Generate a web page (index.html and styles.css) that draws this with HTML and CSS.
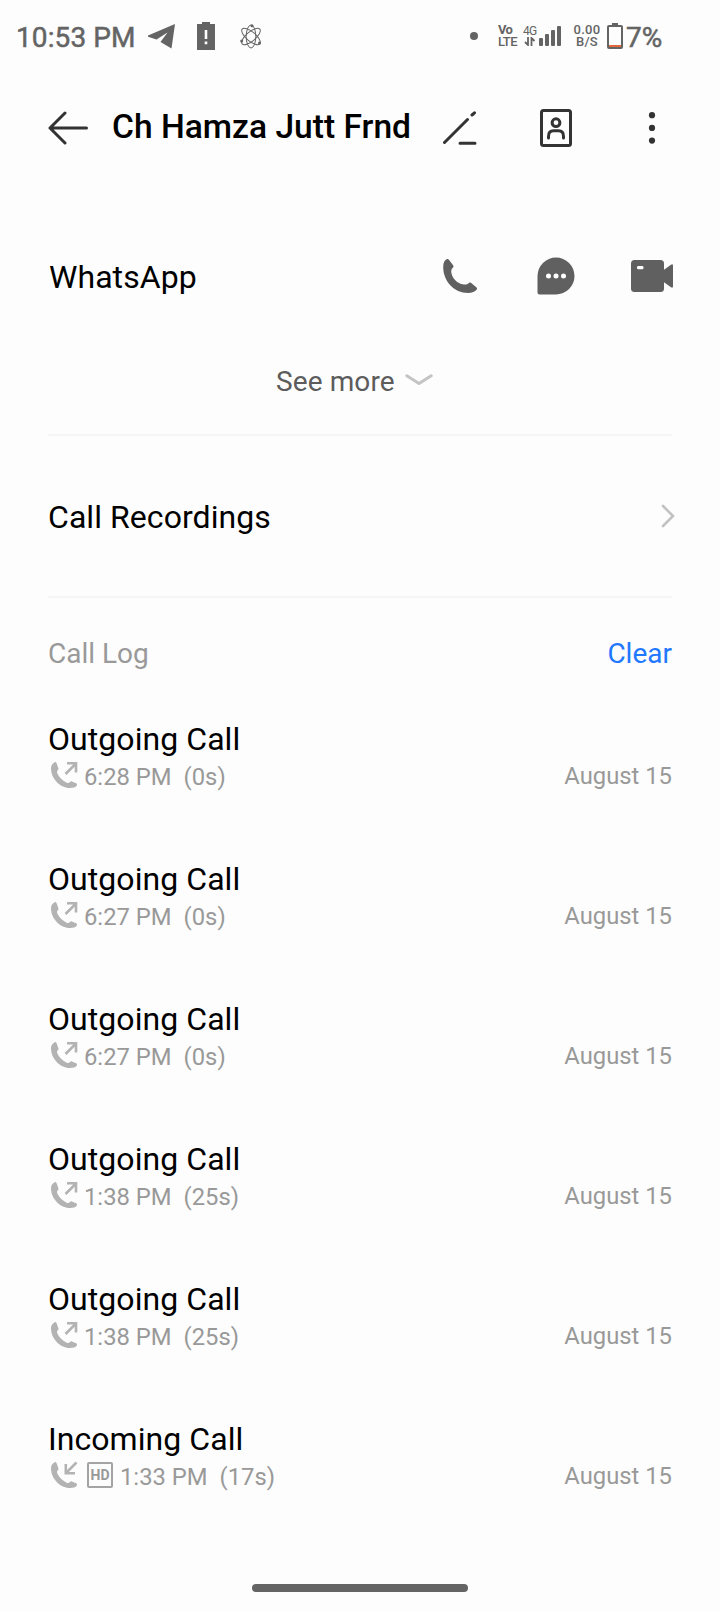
FILE: index.html
```html
<!DOCTYPE html>
<html lang="en">
<head>
<meta charset="utf-8">
<title>Contact details</title>
<link rel="stylesheet" href="styles.css">
</head>
<body>
<svg width="0" height="0" class="defs">
  <symbol id="handset" viewBox="0 0 28 28"><path fill="currentColor" d="M4.700 1.200C2.800 2.200 1 4 1 7.200C1 17 9.500 27 20 27C23.200 27 25.600 26.300 26.800 24.500C27.300 23.700 27 22.800 26.200 22.300L21.800 20.400C21 20.100 20.300 20.500 19.700 21.200C18.800 22.200 17.500 22.300 16.200 21.500C12.600 19.800 9 16.300 7.400 12.600C6.800 11.300 7 10.200 7.800 9.300C8.500 8.500 8.700 7.800 8.300 7L6.500 2C6.100 1 5.400 .8 4.700 1.200Z"/></symbol>
  <symbol id="outgoing" viewBox="0 0 28 28"><use href="#handset"/><path d="M15.500 13L25.500 3M17 2.200H26V11.500" fill="none" stroke="currentColor" stroke-width="2.600"/></symbol>
  <symbol id="incoming" viewBox="0 0 28 28"><use href="#handset"/><path d="M26.500 1.500L16.500 11.500M15.800 3V12.300H25" fill="none" stroke="currentColor" stroke-width="2.600"/></symbol>
</svg>
<div class="screen">
  <div class="status">
    <span class="clock">10:53 PM</span>
    <svg class="plane" width="28" height="26" viewBox="0 0 28 26"><path fill="#646464" d="M27 0L23.500 24.500L12.500 18L19.500 8.500L8.500 15.500L0 12.700V11.500Z"/></svg>
    <svg class="low" width="18" height="28" viewBox="0 0 18 28"><path fill="#646464" d="M5 0H13V2H18V28H0V2H5Z"/><path fill="#fff" d="M7.700 8H10.300V17H7.700ZM7.700 19.500H10.300V22.300H7.700Z"/></svg>
    <svg class="atom" width="22" height="25" viewBox="0 0 22 25" fill="none" stroke="#646464" stroke-width="1"><ellipse cx="11" cy="12.500" rx="4.800" ry="11.500"/><ellipse cx="11" cy="12.500" rx="4.600" ry="11.500" transform="rotate(50 11 12.500)"/><ellipse cx="11" cy="12.500" rx="4.600" ry="11.500" transform="rotate(-50 11 12.500)"/><g fill="#646464" stroke="none"><circle cx="12" cy="1.700" r="1.500"/><circle cx="1.700" cy="17" r="1.500"/><circle cx="19.500" cy="19" r="1.500"/></g></svg>
    <span class="dot"></span>
    <span class="stack volte"><span>Vo</span><span>LTE</span></span>
    <span class="net"><span>4G</span><svg width="12" height="9" viewBox="0 0 12 9" fill="none" stroke="#646464" stroke-width="1.800"><path d="M1 5L4 8V0M7.500 9V1L10.500 4"/></svg></span>
    <svg class="bars" width="22" height="20" viewBox="0 0 22 20" fill="#646464"><rect y="12" width="4" height="8" rx="1"/><rect x="6" y="8" width="4" height="12" rx="1"/><rect x="12" y="4" width="4" height="16" rx="1"/><rect x="18" width="4" height="20" rx="1"/></svg>
    <span class="stack speed"><span>0.00</span><span>B/S</span></span>
    <svg class="battery" width="16" height="26" viewBox="0 0 16 26"><path d="M5 0H11V3H5Z" fill="#646464"/><rect x="1" y="3" width="14" height="22" rx="1" fill="none" stroke="#646464" stroke-width="2"/><rect x="2" y="22" width="12" height="2" fill="#e0673c"/></svg>
    <span class="percent">7%</span>
  </div>

  <header class="row header">
    <svg class="back" width="40" height="34" viewBox="0 0 40 34" fill="none" stroke="#333" stroke-width="3" stroke-linecap="round" stroke-linejoin="round"><path d="M17 2L2 17L17 32M2 17H38.500"/></svg>
    <h1 class="name">Ch Hamza Jutt Frnd</h1>
    <div class="actions">
      <svg width="36" height="34" viewBox="0 0 36 34" fill="none" stroke="#333" stroke-width="3" stroke-linecap="round"><path d="M2.500 31.500L25.500 8.500M30 4L32.500 1.800M18 32.300H33"/></svg>
      <svg width="32" height="38" viewBox="0 0 32 38" fill="none" stroke="#333" stroke-width="3"><rect x="1.500" y="1.500" width="29" height="35" rx="2"/><circle cx="16" cy="13.700" r="3.900"/><path d="M8.500 29V27.500C8.500 23.800 10.500 21.800 13.500 21.800H18.500C21.500 21.800 23.500 23.800 23.500 27.500V29" stroke-linecap="round"/></svg>
      <svg width="8" height="34" viewBox="0 0 8 34" fill="#333"><circle cx="4" cy="4.200" r="3.100"/><circle cx="4" cy="16.900" r="3.100"/><circle cx="4" cy="29.600" r="3.100"/></svg>
    </div>
  </header>

  <div class="row app">
    <span class="label whatsapp">WhatsApp</span>
    <div class="actions">
      <svg width="36" height="36" viewBox="0 0 36 36"><path fill="#606060" d="M4.600 1.300C2.700 2 1.200 4.800 1.200 9C1.200 23 12 35 26 35C30 35 33 33.800 34.700 31.600C35.300 30.700 35.100 29.900 34.300 29.300L29.200 25C28.300 24.200 27.300 24.400 26.500 25.300C25.500 26.500 23.500 26.900 20.500 26.300C15 25.200 10.600 20.500 9.500 15.500C9 12.700 9.200 11.200 10.600 10C11.600 9.100 11.800 8.200 11.100 7.200L7.100 1.900C6.400 1.100 5.600 .9 4.600 1.300Z"/></svg>
      <svg width="38" height="38" viewBox="0 0 38 38"><path fill="#606060" d="M19 .5A18.500 18.500 0 1 1 19 37.500H2.500A2 2 0 0 1 .5 35.500V19A18.500 18.500 0 0 1 19 .5Z"/><g fill="#fff"><circle cx="11.500" cy="19" r="2.500"/><circle cx="19" cy="19" r="2.500"/><circle cx="26.500" cy="19" r="2.500"/></g></svg>
      <svg width="42" height="34" viewBox="0 0 42 34"><rect y="1" width="33" height="32" rx="3.500" fill="#606060"/><path fill="#606060" d="M32 11.500L40 5.700Q42 4.700 42 6.700V27.300Q42 29.300 40 28.300L32 22.500Z"/><rect x="6" y="7" width="6.500" height="3.300" rx="1.400" fill="#fff"/></svg>
    </div>
  </div>

  <div class="more">
    <span>See more</span>
    <svg width="28" height="12" viewBox="0 0 28 12" fill="none" stroke="#c4c4c4" stroke-width="3" stroke-linecap="round" stroke-linejoin="round"><path d="M1.800 1.800L14 9.500L26.200 1.800"/></svg>
  </div>

  <div class="recordings">
    <span class="label">Call Recordings</span>
    <svg width="14" height="24" viewBox="0 0 14 24" fill="none" stroke="#c2c2c2" stroke-width="2.600" stroke-linecap="round"><path d="M2 2L12 12L2 22"/></svg>
  </div>

  <div class="log-head"><span class="log-title">Call Log</span><span class="clear">Clear</span></div>

  <div class="entry"><div class="label kind">Outgoing Call</div><div class="detail"><svg class="call"><use href="#outgoing"/></svg><span>6:28 PM</span><span class="length">(0s)</span><span class="date">August 15</span></div></div>
  <div class="entry"><div class="label kind">Outgoing Call</div><div class="detail"><svg class="call"><use href="#outgoing"/></svg><span>6:27 PM</span><span class="length">(0s)</span><span class="date">August 15</span></div></div>
  <div class="entry"><div class="label kind">Outgoing Call</div><div class="detail"><svg class="call"><use href="#outgoing"/></svg><span>6:27 PM</span><span class="length">(0s)</span><span class="date">August 15</span></div></div>
  <div class="entry"><div class="label kind">Outgoing Call</div><div class="detail"><svg class="call"><use href="#outgoing"/></svg><span>1:38 PM</span><span class="length">(25s)</span><span class="date">August 15</span></div></div>
  <div class="entry"><div class="label kind">Outgoing Call</div><div class="detail"><svg class="call"><use href="#outgoing"/></svg><span>1:38 PM</span><span class="length">(25s)</span><span class="date">August 15</span></div></div>
  <div class="entry"><div class="label kind">Incoming Call</div><div class="detail"><svg class="call"><use href="#incoming"/></svg><span class="hd">HD</span><span>1:33 PM</span><span class="length">(17s)</span><span class="date">August 15</span></div></div>

  <div class="home"></div>
</div>
</body>
</html>
```
FILE: styles.css
```css
* { box-sizing: border-box; }
body { margin: 0; background: #fdfdfd; font-family: Roboto, "Liberation Sans", sans-serif; color: #000; }
svg { display: block; flex: none; }
span { white-space: nowrap; }
.defs { position: absolute; }
.screen { width: 720px; height: 1612px; display: flex; flex-direction: column; overflow: hidden; }

.status { height: 74px; flex: none; display: flex; align-items: center; padding-left: 16px; color: #646464; font-size: 28px; font-weight: 500; }
.clock { width: 132px; font-weight: 400; letter-spacing: .1px; -webkit-text-stroke: .5px #646464; }
.plane { margin-top: -1px; }
.low { margin: -2px 0 0 21px; }
.atom { margin: -2px 0 0 25px; }
.dot { width: 8px; height: 8px; border-radius: 50%; background: #646464; margin: -2px 0 0 208px; }
.stack { display: flex; flex-direction: column; font-size: 13px; line-height: 12px; font-weight: 500; }
.volte { width: 25px; margin: -2px 0 0 20px; letter-spacing: -.6px; }
.volte span:first-child { font-weight: 700; }
.net { width: 16px; height: 20px; font-size: 12px; line-height: 11px; letter-spacing: -.8px; font-weight: 400; display: flex; flex-direction: column; margin-top: -2px; }
.net svg { margin-left: 1px; }
.bars { margin: -2px 0 0 0; }
.speed { width: 28px; align-items: center; margin: -2px 6px 0 12px; letter-spacing: .3px; }
.battery { margin-top: -3px; }
.percent { margin-left: 3px; font-weight: 400; -webkit-text-stroke: .5px #646464; }

.row { flex: none; display: flex; align-items: center; padding: 0 20px 0 48px; }
.header { height: 106px; padding-top: 2px; }
.name { flex: 1; min-width: 0; margin: -3px 0 0 24px; font-size: 33.600px; font-weight: 500; line-height: 40px; white-space: nowrap; }
.actions { flex: none; display: grid; grid-template-columns: repeat(3, 96px); justify-items: center; align-items: center; margin-left: auto; }
.app { height: 86px; margin-top: 54px; }
.app .actions { margin-top: -2px; }
.label { font-size: 32px; line-height: 38px; letter-spacing: .06px; }
.whatsapp { padding-left: 1px; }
.more { height: 116px; flex: none; display: flex; align-items: center; padding-top: 9px; margin: 0 48px; gap: 10px; padding-left: 228px; border-bottom: 2px solid #f5f5f5; font-size: 28px; letter-spacing: .1px; color: #5c5c5c; }
.more svg { margin-top: -3px; }
.recordings { height: 162px; flex: none; display: flex; align-items: center; justify-content: space-between; margin: 0 48px; padding-top: 2px; border-bottom: 2px solid #f5f5f5; }
.recordings svg { margin: -2px -3px 0 0; }
.log-head { height: 110px; flex: none; display: flex; align-items: center; justify-content: space-between; margin: 0 48px; font-size: 28px; color: #999; }
.clear { color: #1f78ff; }
.entry { height: 140px; flex: none; padding: 12px 48px 0; }
.detail { display: flex; align-items: center; height: 37px; font-size: 23.800px; color: #999; }
.call { width: 28px; height: 28px; margin: -3px 6px 0 2px; color: #b3b3b3; }
.hd { width: 26px; height: 26px; margin: -3px 7px 0 3px; border: 2px solid #a4a4a4; border-radius: 2px; font-size: 14px; font-weight: 700; line-height: 22px; text-align: center; }
.length { margin-left: 12px; }
.date { margin: -2px 0 0 auto; }
.home { width: 216px; height: 8px; flex: none; border-radius: 4px; background: #646464; margin: 36px auto 0; }
```
